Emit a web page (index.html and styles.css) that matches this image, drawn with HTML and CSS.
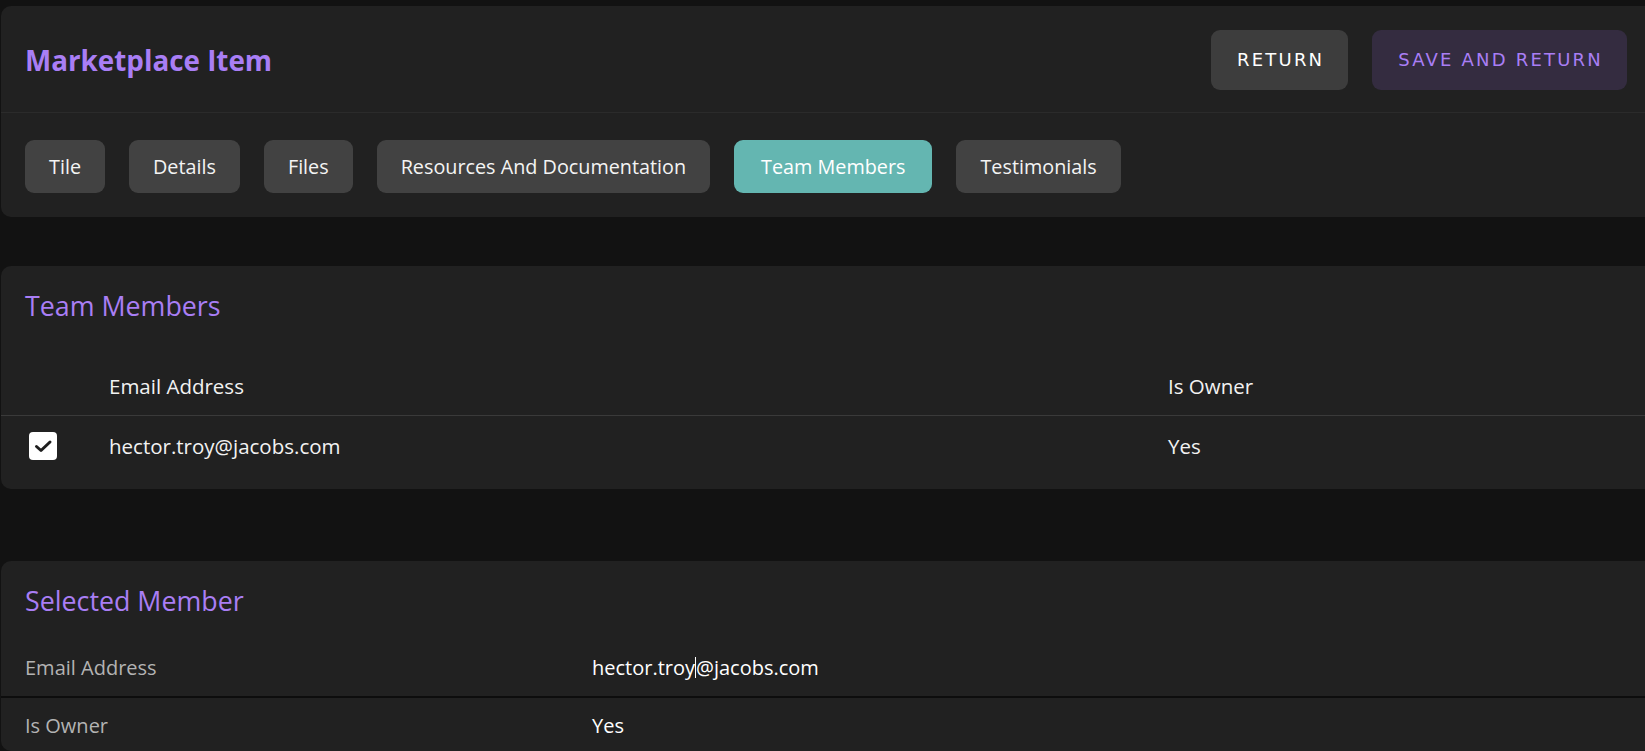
FILE: index.html
```html
<!DOCTYPE html>
<html lang="en">
<head>
<meta charset="utf-8">
<title>Marketplace Item</title>
<link rel="stylesheet" href="styles.css">
</head>
<body>
<div class="page">
  <section class="card header-card">
    <div class="header-top">
      <h1 class="page-title">Marketplace Item</h1>
      <div class="actions">
        <button class="btn btn-return">RETURN</button>
        <button class="btn btn-save">SAVE AND RETURN</button>
      </div>
    </div>
    <nav class="tabs">
      <span class="tab">Tile</span>
      <span class="tab">Details</span>
      <span class="tab">Files</span>
      <span class="tab">Resources And Documentation</span>
      <span class="tab tab-active">Team Members</span>
      <span class="tab">Testimonials</span>
    </nav>
  </section>

  <section class="card members-card">
    <h2 class="section-title">Team Members</h2>
    <div class="table">
      <div class="table-row table-head">
        <div class="cell cell-check"></div>
        <div class="cell">Email Address</div>
        <div class="cell">Is Owner</div>
      </div>
      <div class="table-row table-body-row">
        <div class="cell cell-check">
          <span class="checkbox">
            <svg viewBox="0 0 28 28" width="28" height="28"><path d="M7.5 14.5 L12 18.5 L21 10" fill="none" stroke="#1e1e1e" stroke-width="3" stroke-linecap="round" stroke-linejoin="round"/></svg>
          </span>
        </div>
        <div class="cell">hector.troy@jacobs.com</div>
        <div class="cell">Yes</div>
      </div>
    </div>
  </section>

  <section class="card selected-card">
    <h2 class="section-title">Selected Member</h2>
    <div class="field-row field-row-first">
      <div class="field-label">Email Address</div>
      <div class="field-value">hector.troy<span class="caret"></span>@jacobs.com</div>
    </div>
    <div class="field-row field-row-last">
      <div class="field-label">Is Owner</div>
      <div class="field-value">Yes</div>
    </div>
  </section>
</div>
</body>
</html>
```

FILE: styles.css
```css
html, body {
  margin: 0;
  padding: 0;
  background: #121212;
  overflow: hidden;
}

body {
  font-family: "Open Sans", "Noto Sans", sans-serif;
  color: #f2f2f2;
  width: 1645px;
  height: 751px;
}

.page {
  padding: 6px 0 0 1px;
  display: flex;
  flex-direction: column;
  width: 1680px;
}

.card {
  background: #212121;
  border-radius: 10px;
}

.header-card {
  height: 211px;
}

.header-top {
  height: 107px;
  border-bottom: 1px solid #2b2b2b;
  display: flex;
  align-items: center;
  justify-content: space-between;
  padding: 0 18px 0 24px;
  width: 1644px;
  box-sizing: border-box;
}

.page-title {
  margin: 0;
  font-size: 27.8px;
  font-weight: 700;
  color: #a97ef5;
  position: relative;
  top: 1px;
}

.actions {
  display: flex;
  gap: 24px;
  margin-top: 1px;
}

.btn {
  height: 60px;
  border: none;
  border-radius: 9px;
  font-family: "DejaVu Sans", sans-serif;
  font-size: 18px;
  letter-spacing: 2.2px;
  padding: 0 24px 0 26px;
}

.btn-return {
  background: #3d3d3d;
  color: #ffffff;
}

.btn-save {
  background: #342c40;
  color: #a97ef5;
}

.tabs {
  display: flex;
  gap: 24px;
  padding: 27px 24px 0 24px;
}

.tab {
  height: 53px;
  display: flex;
  align-items: center;
  padding: 0 24px;
  background: #424242;
  border-radius: 9px;
  font-size: 19.8px;
  color: #f4f4f4;
}

.tab-active {
  background: #64b6b1;
  color: #ffffff;
  padding: 0 27px;
}

.members-card {
  margin-top: 49px;
  height: 223px;
}

.section-title {
  margin: 0;
  padding: 23px 0 0 24px;
  font-size: 26.8px;
  line-height: 34px;
  font-weight: 400;
  color: #a97ef5;
}

.table {
  margin-top: 34px;
}

.table-row {
  display: grid;
  grid-template-columns: 108px 1059px 1fr;
  align-items: center;
  font-size: 20.5px;
}

.table-head {
  height: 58px;
  border-bottom: 1px solid #3a3a3a;
  font-weight: 500;
}

.table-body-row {
  height: 60px;
}

.cell-check {
  padding-left: 28px;
  display: flex;
  align-items: center;
}

.checkbox {
  width: 28px;
  height: 28px;
  border-radius: 4px;
  background: #ffffff;
  display: block;
}

.checkbox svg {
  display: block;
}

.selected-card {
  margin-top: 72px;
  height: 190px;
}

.selected-card .section-title {
  padding-top: 23px;
}

.field-row {
  display: grid;
  grid-template-columns: 567px 1fr;
  align-items: center;
  height: 57px;
  padding-left: 24px;
  font-size: 20px;
}

.field-row-first {
  margin-top: 21px;
  border-bottom: 2px solid #0d0d0d;
}

.field-row-last {
  height: 54px;
}

.field-label {
  color: #b3b3b3;
}

.field-value {
  color: #ffffff;
}

.caret {
  display: inline-block;
  width: 1px;
  height: 21px;
  background: #ffffff;
  vertical-align: -3px;
}
```
